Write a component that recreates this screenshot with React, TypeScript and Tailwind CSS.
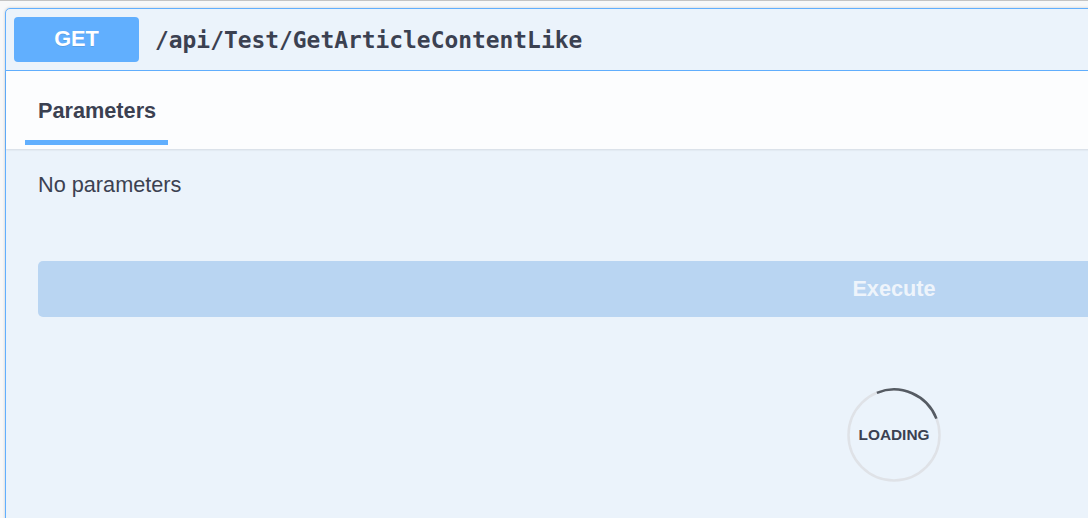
export default function App() {
  return (
    <div className="h-[518px] w-[1088px] overflow-hidden border-t border-[#c4c4c4] bg-[#f7f8f9] pt-[7px] pl-[5px] font-['Liberation_Sans',Arial,sans-serif]">
      <div className="w-[1778px] h-[600px] rounded-tl-[5px] border border-[#61affe] bg-[#ebf3fb] shadow-[0_0_3px_rgba(0,0,0,0.19)]">
        {/* summary bar */}
        <div className="flex items-center h-[62px] px-[8px] border-b border-[#61affe]">
          <div className="flex items-center justify-center w-[125px] h-[45px] rounded-[4px] bg-[#61affe] text-white font-bold text-[21.7px] [text-shadow:0_1px_0_rgba(0,0,0,0.1)]">
            GET
          </div>
          <span className="ml-[16px] pt-[2px] text-[22.9px] font-bold text-[#3b4151] font-['DejaVu_Sans_Mono',monospace]">
            /api/Test/GetArticleContentLike
          </span>
        </div>

        {/* tabs */}
        <div className="h-[78px] bg-[#fcfdfe] shadow-[0_1px_2px_rgba(0,0,0,0.1)] pl-[19px] flex items-end">
          <div className="w-[143px] h-[78px] flex flex-col">
            <div className="flex-1 flex items-center pl-[13px] pt-[11px] text-[21.7px] font-bold text-[#3b4151]">
              Parameters
            </div>
            <div className="h-[5px] bg-[#61affe] mb-[4px]" />
          </div>
        </div>

        {/* body */}
        <div className="px-[32px]">
          <p className="pt-[23px] text-[21.7px] text-[#3b4151] leading-[26px]">No parameters</p>
          <button className="mt-[63px] w-full h-[56px] rounded-[5px] bg-[#b9d5f2] text-[21.7px] font-bold text-[#eef4fb]">
            Execute
          </button>
          <div className="flex justify-center pt-[71px]">
            <div className="relative w-[94px] h-[94px] flex items-center justify-center">
              <svg className="absolute inset-0" width="94" height="94" viewBox="0 0 94 94">
                <circle cx="47" cy="47" r="45.5" fill="none" stroke="#dfe2e7" strokeWidth="2.5" />
                <path d="M 29.9 4.8 A 45.5 45.5 0 0 1 89.4 30.6" fill="none" stroke="#555b63" strokeWidth="2.5" />
              </svg>
              <span className="relative text-[15.4px] font-bold text-[#3b4151]">LOADING</span>
            </div>
          </div>
        </div>
      </div>
    </div>
  );
}
